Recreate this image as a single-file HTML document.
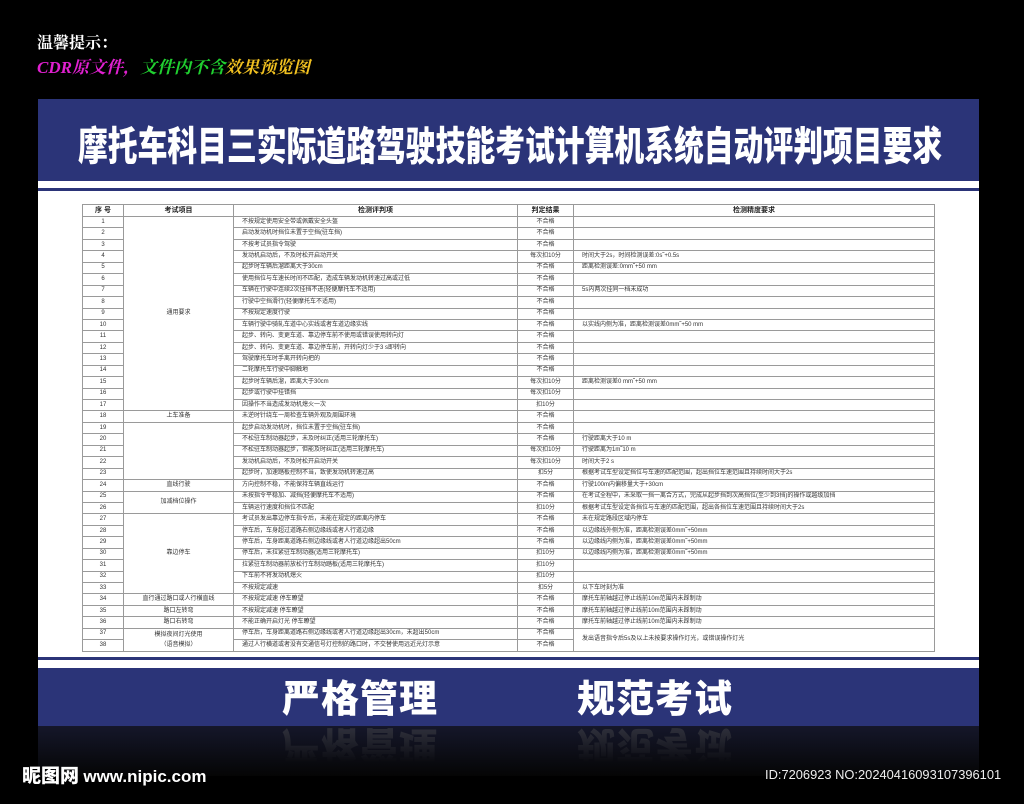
<!DOCTYPE html>
<html><head><meta charset="utf-8"><style>
*{margin:0;padding:0;box-sizing:border-box}
body{width:1024px;height:804px;background:#000;position:relative;overflow:hidden;font-family:"Liberation Sans","Noto Sans CJK SC",sans-serif}
.abs{position:absolute}
.blue{background:#2b3478}
table{position:absolute;left:82px;top:204px;width:853px;border-collapse:collapse;table-layout:fixed;font-size:6px;color:#333}
td,th{border:1px solid #9a9a9a;height:11.45px;line-height:9px;padding:0;white-space:nowrap;overflow:hidden}
th{height:12px;font-size:7px;font-weight:bold;color:#222}
td.c{text-align:center}
td.l{padding-left:8px}
.refl{top:724px;color:#555;opacity:.45;font-family:'Noto Sans CJK SC',sans-serif;font-weight:900;font-size:38px;line-height:48px;white-space:nowrap;letter-spacing:1px;transform:scaleY(-1);-webkit-mask-image:linear-gradient(to top,#000,transparent 80%);mask-image:linear-gradient(to top,#000,transparent 80%)}
</style></head><body>
<div class="abs" style="left:37px;top:30px;color:#fff;font-family:'Liberation Serif','Noto Serif CJK SC',serif;font-size:16px;font-weight:bold;white-space:nowrap">温馨提示：</div>
<div class="abs" style="left:37px;top:53px;font-family:'Liberation Serif','Noto Serif CJK SC',serif;font-size:17px;font-style:italic;font-weight:bold;white-space:nowrap"><span style="color:#e020d0">CDR原文件，</span><span style="color:#20d030">文件内不含</span><span style="color:#f0c020">效果预览图</span></div>

<div class="abs blue" style="left:38px;top:99px;width:941px;height:82px"></div>
<div class="abs" style="left:38px;top:181px;width:941px;height:7px;background:#fff"></div>
<div class="abs blue" style="left:38px;top:188px;width:941px;height:3px"></div>
<div class="abs" style="left:38px;top:191px;width:941px;height:466px;background:#fff"></div>
<div class="abs blue" style="left:38px;top:657px;width:941px;height:3px"></div>
<div class="abs" style="left:38px;top:660px;width:941px;height:8px;background:#fff"></div>
<div class="abs blue" style="left:38px;top:668px;width:941px;height:58px"></div>
<div class="abs" style="left:38px;top:726px;width:941px;height:50px;background:linear-gradient(#15172a,#050505)"></div>

<div class="abs" style="left:78px;top:119px;width:1200px;color:#fff;font-family:'Noto Sans CJK SC',sans-serif;font-weight:900;font-size:40px;line-height:48px;white-space:nowrap;transform:scaleX(.745);transform-origin:left">摩托车科目三实际道路驾驶技能考试计算机系统自动评判项目要求</div>

<div class="abs" style="left:282px;top:672px;color:#fff;font-family:'Noto Sans CJK SC',sans-serif;font-weight:900;font-size:38px;line-height:48px;white-space:nowrap;letter-spacing:1px">严格管理</div>
<div class="abs" style="left:577px;top:672px;color:#fff;font-family:'Noto Sans CJK SC',sans-serif;font-weight:900;font-size:38px;line-height:48px;white-space:nowrap;letter-spacing:1px">规范考试</div>
<div class="abs refl" style="left:282px">严格管理</div>
<div class="abs refl" style="left:577px">规范考试</div>

<div class="abs" style="left:22px;top:764px;color:#fff;font-family:'Noto Sans CJK SC',sans-serif;font-weight:900;font-size:19px;line-height:22px;white-space:nowrap">昵图网 <span style="font-family:'Liberation Sans',sans-serif;font-size:17px;font-weight:bold">www.nipic.com</span></div>
<div class="abs" style="left:765px;top:768px;color:#eee;font-size:13px;line-height:14px;white-space:nowrap;transform:scaleX(.99);transform-origin:left">ID:7206923 NO:20240416093107396101</div>

<table>
<colgroup><col style="width:41px"><col style="width:110px"><col style="width:284px"><col style="width:56px"><col></colgroup>
<tr><th>序 号</th><th>考试项目</th><th>检测评判项</th><th>判定结果</th><th>检测精度要求</th></tr>
<tr><td class="c">1</td><td class="c" rowspan="17">通用要求</td><td class="l">不按规定使用安全带或佩戴安全头盔</td><td class="c">不合格</td><td class="l"></td></tr>
<tr><td class="c">2</td><td class="l">启动发动机时挡位未置于空挡(驻车挡)</td><td class="c">不合格</td><td class="l"></td></tr>
<tr><td class="c">3</td><td class="l">不按考试员指令驾驶</td><td class="c">不合格</td><td class="l"></td></tr>
<tr><td class="c">4</td><td class="l">发动机启动后，不及时松开启动开关</td><td class="c">每次扣10分</td><td class="l">时间大于2s，时间检测误差:0s˜+0.5s</td></tr>
<tr><td class="c">5</td><td class="l">起步时车辆后溜距离大于30cm</td><td class="c">不合格</td><td class="l">距离检测误差:0mm˜+50 mm</td></tr>
<tr><td class="c">6</td><td class="l">使用挡位与车速长时间不匹配，造成车辆发动机转速过高或过低</td><td class="c">不合格</td><td class="l"></td></tr>
<tr><td class="c">7</td><td class="l">车辆在行驶中连续2次挂挡不进(轻便摩托车不适用)</td><td class="c">不合格</td><td class="l">5s内两次挂同一档未成功</td></tr>
<tr><td class="c">8</td><td class="l">行驶中空挡滑行(轻便摩托车不适用)</td><td class="c">不合格</td><td class="l"></td></tr>
<tr><td class="c">9</td><td class="l">不按规定速度行驶</td><td class="c">不合格</td><td class="l"></td></tr>
<tr><td class="c">10</td><td class="l">车辆行驶中骑轧车道中心实线或者车道边缘实线</td><td class="c">不合格</td><td class="l">以实线内侧为准，距离检测误差0mm˜+50 mm</td></tr>
<tr><td class="c">11</td><td class="l">起步、转向、变更车道、靠边停车前不使用或错误使用转向灯</td><td class="c">不合格</td><td class="l"></td></tr>
<tr><td class="c">12</td><td class="l">起步、转向、变更车道、靠边停车前，开转向灯少于3 s即转向</td><td class="c">不合格</td><td class="l"></td></tr>
<tr><td class="c">13</td><td class="l">驾驶摩托车时手离开转向把的</td><td class="c">不合格</td><td class="l"></td></tr>
<tr><td class="c">14</td><td class="l">二轮摩托车行驶中脚触地</td><td class="c">不合格</td><td class="l"></td></tr>
<tr><td class="c">15</td><td class="l">起步时车辆后溜，距离大于30cm</td><td class="c">每次扣10分</td><td class="l">距离检测误差0 mm˜+50 mm</td></tr>
<tr><td class="c">16</td><td class="l">起步或行驶中挂错挡</td><td class="c">每次扣10分</td><td class="l"></td></tr>
<tr><td class="c">17</td><td class="l">因操作不当造成发动机熄火一次</td><td class="c">扣10分</td><td class="l"></td></tr>
<tr><td class="c">18</td><td class="c">上车准备</td><td class="l">未逆时针绕车一周检查车辆外观及周围环境</td><td class="c">不合格</td><td class="l"></td></tr>
<tr><td class="c">19</td><td class="c" rowspan="5"></td><td class="l">起步启动发动机时，挡位未置于空挡(驻车挡)</td><td class="c">不合格</td><td class="l"></td></tr>
<tr><td class="c">20</td><td class="l">不松驻车制动器起步，未及时纠正(适用三轮摩托车)</td><td class="c">不合格</td><td class="l">行驶距离大于10 m</td></tr>
<tr><td class="c">21</td><td class="l">不松驻车制动器起步，但能及时纠正(适用三轮摩托车)</td><td class="c">每次扣10分</td><td class="l">行驶距离为1m˜10 m</td></tr>
<tr><td class="c">22</td><td class="l">发动机启动后，不及时松开启动开关</td><td class="c">每次扣10分</td><td class="l">时间大于2 s</td></tr>
<tr><td class="c">23</td><td class="l">起步时，加速踏板控制不当，致使发动机转速过高</td><td class="c">扣5分</td><td class="l">根据考试车型设定挡位与车速的匹配范围，超出挡位车速范围且持续时间大于2s</td></tr>
<tr><td class="c">24</td><td class="c">直线行驶</td><td class="l">方向控制不稳，不能保持车辆直线运行</td><td class="c">不合格</td><td class="l">行驶100m内偏移量大于+30cm</td></tr>
<tr><td class="c">25</td><td class="c" rowspan="2">加减档位操作</td><td class="l">未按指令平稳加、减挡(轻便摩托车不适用)</td><td class="c">不合格</td><td class="l">在考试全程中，未采取一挡一离合方式，完成从起步挡到次高挡位(至少到3挡)的操作或越级加挡</td></tr>
<tr><td class="c">26</td><td class="l">车辆运行速度和挡位不匹配</td><td class="c">扣10分</td><td class="l">根据考试车型设定各挡位与车速的匹配范围，超出各挡位车速范围且持续时间大于2s</td></tr>
<tr><td class="c">27</td><td class="c" rowspan="7">靠边停车</td><td class="l">考试员发出靠边停车指令后，未能在规定的距离内停车</td><td class="c">不合格</td><td class="l">未在规定路段区域内停车</td></tr>
<tr><td class="c">28</td><td class="l">停车后，车身超过道路右侧边缘线或者人行道边缘</td><td class="c">不合格</td><td class="l">以边缘线外侧为准，距离检测误差0mm˜+50mm</td></tr>
<tr><td class="c">29</td><td class="l">停车后，车身距离道路右侧边缘线或者人行道边缘超出50cm</td><td class="c">不合格</td><td class="l">以边缘线内侧为准，距离检测误差0mm˜+50mm</td></tr>
<tr><td class="c">30</td><td class="l">停车后，未拉紧驻车制动器(适用三轮摩托车)</td><td class="c">扣10分</td><td class="l">以边缘线内侧为准，距离检测误差0mm˜+50mm</td></tr>
<tr><td class="c">31</td><td class="l">拉紧驻车制动器前放松行车制动踏板(适用三轮摩托车)</td><td class="c">扣10分</td><td class="l"></td></tr>
<tr><td class="c">32</td><td class="l">下车前不将发动机熄火</td><td class="c">扣10分</td><td class="l"></td></tr>
<tr><td class="c">33</td><td class="l">不按规定减速</td><td class="c">扣5分</td><td class="l">以下车时刻为准</td></tr>
<tr><td class="c">34</td><td class="c">直行通过路口或人行横直线</td><td class="l">不按规定减速 停车瞭望</td><td class="c">不合格</td><td class="l">摩托车前轴越过停止线前10m范围内未踩制动</td></tr>
<tr><td class="c">35</td><td class="c">路口左转弯</td><td class="l">不按规定减速 停车瞭望</td><td class="c">不合格</td><td class="l">摩托车前轴越过停止线前10m范围内未踩制动</td></tr>
<tr><td class="c">36</td><td class="c">路口右转弯</td><td class="l">不能正确开启灯光 停车瞭望</td><td class="c">不合格</td><td class="l">摩托车前轴越过停止线前10m范围内未踩制动</td></tr>
<tr><td class="c">37</td><td class="c" rowspan="2" style="line-height:10px">模拟夜间灯光使用<br>（语音模拟）</td><td class="l">停车后，车身距离道路右侧边缘线或者人行道边缘超出30cm，未超出50cm</td><td class="c">不合格</td><td class="l" rowspan="2">发出语音指令后5s及以上未按要求操作灯光，或错误操作灯光</td></tr>
<tr><td class="c">38</td><td class="l">通过人行横道或者没有交通信号灯控制的路口时，不交替使用远近光灯示意</td><td class="c">不合格</td></tr>
</table>
</body></html>
